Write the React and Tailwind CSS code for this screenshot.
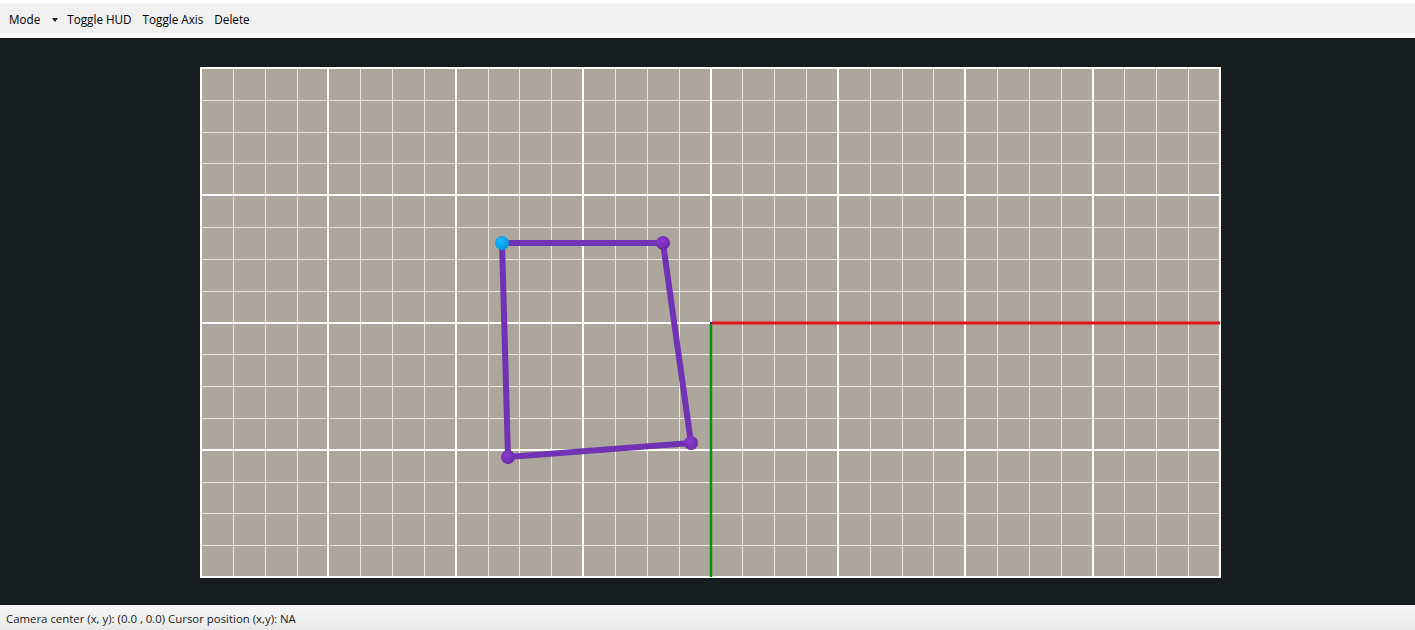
const COLS = 32;
const ROWS = 16;
const W = 1019;
const H = 509;

const points = [
  [302, 176],
  [463, 176],
  [491, 376],
  [308, 390],
];

const GridCanvas = () => {
  const cw = W / COLS;
  const rh = H / ROWS;
  const minorV = [];
  const majorV = [];
  for (let i = 0; i <= COLS; i++) {
    const x = Math.round(i * cw) + 1;
    (i % 4 === 0 ? majorV : minorV).push(x);
  }
  const minorH = [];
  const majorH = [];
  for (let j = 0; j <= ROWS; j++) {
    const y = Math.round(j * rh) + 1;
    (j % 4 === 0 ? majorH : minorH).push(y);
  }
  const ox = majorV[4];
  const oy = majorH[2];

  return (
    <svg width={W + 2} height={H + 2} className="block">
      <rect x="0" y="0" width={W + 2} height={H + 2} fill="#aca69d" />
      {/* minor lines */}
      {minorV.map((x) => (
        <line key={"mv" + x} x1={x + 0.5} y1="0" x2={x + 0.5} y2={H + 2} stroke="#e9e7e3" strokeWidth="1" />
      ))}
      {minorH.map((y) => (
        <line key={"mh" + y} x1="0" y1={y + 0.5} x2={W + 2} y2={y + 0.5} stroke="#e9e7e3" strokeWidth="1" />
      ))}
      {/* major lines */}
      {majorV.map((x) => (
        <line key={"Mv" + x} x1={x} y1="0" x2={x} y2={H + 2} stroke="#ffffff" strokeWidth="2" />
      ))}
      {majorH.map((y) => (
        <line key={"Mh" + y} x1="0" y1={y} x2={W + 2} y2={y} stroke="#ffffff" strokeWidth="2" />
      ))}

      {/* axes */}
      <line x1={ox + 1} y1={oy} x2={W + 1} y2={oy} stroke="#e8141b" strokeWidth="3" />
      <line x1={ox} y1={oy + 1} x2={ox} y2={H + 1} stroke="#0d8f0d" strokeWidth="2.5" />
      <rect x={ox - 1} y={oy - 1} width="2" height="2" fill="#2630c8" />

      {/* polygon */}
      <polygon
        points={points.map((p) => p.join(",")).join(" ")}
        fill="none"
        stroke="#7232b4"
        strokeWidth="6"
        strokeLinejoin="round"
      />
      <defs>
        <radialGradient id="vp" cx="0.4" cy="0.35" r="0.7">
          <stop offset="0" stopColor="#8a3ed0" />
          <stop offset="1" stopColor="#6a27a8" />
        </radialGradient>
        <radialGradient id="vc" cx="0.4" cy="0.35" r="0.7">
          <stop offset="0" stopColor="#1ab8ff" />
          <stop offset="1" stopColor="#0095dd" />
        </radialGradient>
      </defs>
      {points.slice(1).map((p) => (
        <circle key={p.join("-")} cx={p[0]} cy={p[1]} r="7" fill="url(#vp)" />
      ))}
      <circle cx={points[0][0]} cy={points[0][1]} r="7" fill="url(#vc)" />
    </svg>
  );
};

export default function App() {
  const font = { fontFamily: '"Open Sans", "Noto Sans", sans-serif' };

  return (
    <div className="w-[1415px] h-[630px] flex flex-col bg-white overflow-hidden" style={font}>
      {/* toolbar */}
      <div className="mt-[3px] h-[30px] bg-[#f0f0f0] flex items-center pt-[3px] pl-[9px] text-[11.7px] text-black">
        <span>Mode</span>
        <span className="ml-[12px] mr-[9px] w-0 h-0 border-l-[3.5px] border-r-[3.5px] border-t-[4px] border-l-transparent border-r-transparent border-t-[#222]" />
        <span>Toggle HUD</span>
        <span className="ml-[11px]">Toggle Axis</span>
        <span className="ml-[11px]">Delete</span>
      </div>
      <div className="h-[5px] bg-white" />

      {/* viewport */}
      <div className="flex-1 bg-[#181d20] pl-[200px] pt-[29px]">
        <GridCanvas />
      </div>

      {/* status bar */}
      <div className="h-[25px] bg-gradient-to-b from-[#f7f7f7] to-[#e9e9e9] flex items-center pt-[2px] pl-[6px] text-[11.4px] text-[#1a1a1a]">
        Camera center (x, y): (0.0 , 0.0) Cursor position (x,y): NA
      </div>
    </div>
  );
}
